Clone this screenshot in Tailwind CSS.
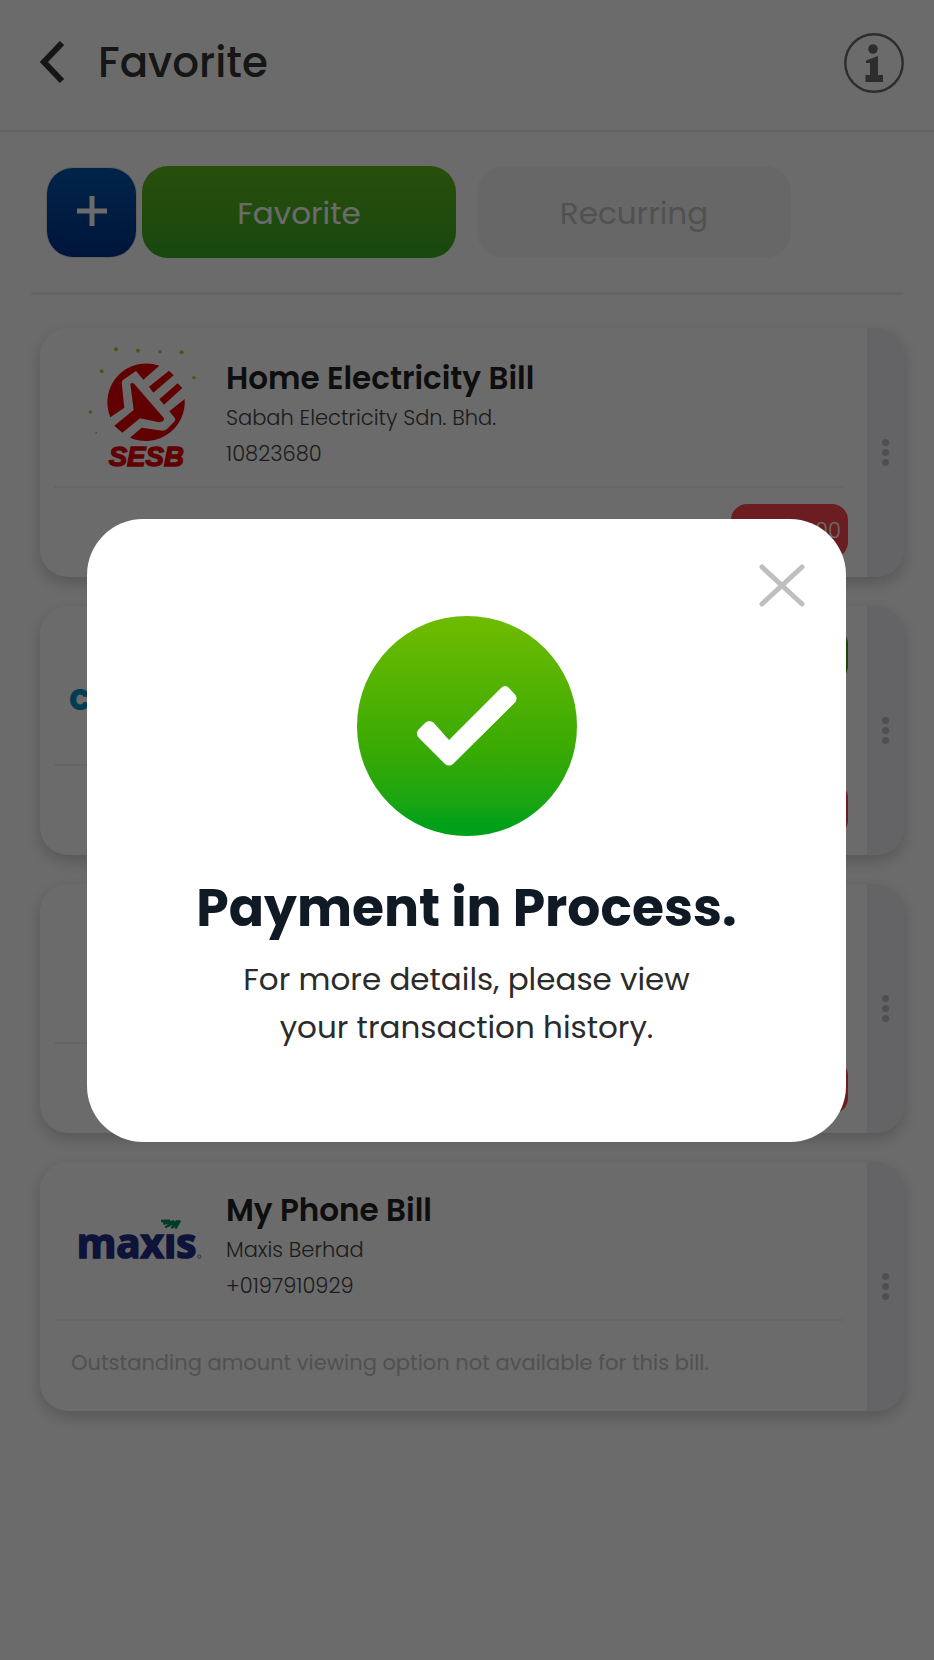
<!DOCTYPE html>
<html lang="en">
<head>
  <meta charset="UTF-8">
  <meta name="viewport" content="width=device-width, initial-scale=1.0">
  <title>Favorite</title>
  <script src="https://cdn.jsdelivr.net/npm/@tailwindcss/browser@4"></script>
</head>
<body class="bg-white min-h-screen font-['Poppins','Inter',sans-serif] text-[#222222]">

  <!-- Header -->
  <header class="flex items-center h-[132px] pl-10 pr-[30px] pb-1 border-b-2 border-[#e8e8f2]">
    <button type="button" aria-label="Back" class="shrink-0">
      <svg class="w-7 h-11" viewBox="0 0 28 44" fill="none" stroke="#363636" stroke-width="6">
        <path d="M22 2 4 21l18 19"/>
      </svg>
    </button>
    <h1 class="ml-[30px] text-[42px] leading-[60px] font-medium text-[#363636]">Favorite</h1>
    <button type="button" aria-label="Information" class="ml-auto shrink-0">
      <svg class="w-[60px] h-[60px]" viewBox="0 0 60 60">
        <circle cx="30" cy="30" r="28.7" fill="none" stroke="#6b6b6b" stroke-width="2.4"/>
        <circle cx="29" cy="16" r="4.8" fill="#6b6b6b"/>
        <path d="M22 27.500l12-4.500v19h5v7H21.500v-7h4.500V30h-4z" fill="#6b6b6b"/>
      </svg>
    </button>
  </header>

  <!-- Tabs -->
  <nav class="flex items-center mx-[31px] pl-4 pt-[34px] pb-[34px] border-b-3 border-[#efeff4]">
    <button type="button" aria-label="Add bill" class="flex items-center justify-center shrink-0 size-[89px] pb-[2px] rounded-[26px] bg-linear-to-b from-[#0058ac] to-[#00328c] ring-1 ring-[#e4e4e4]">
      <svg class="size-[30px]" viewBox="0 0 30 30" stroke="#ffffff" stroke-width="5">
        <path d="M15 0v30M0 15h30"/>
      </svg>
    </button>
    <button type="button" class="ml-[6px] flex-1 max-w-[314px] h-[92px] pt-[2px] rounded-[26px] bg-linear-to-b from-[#62ba1a] to-[#37ab24] text-[31px] text-white">Favorite</button>
    <button type="button" class="ml-[21px] flex-1 max-w-[314px] h-[92px] pt-[2px] rounded-[26px] bg-[#f5f5f5] text-[31px] text-[#c1c1c1]">Recurring</button>
  </nav>

  <!-- Bills -->
  <main class="flex flex-col gap-[29px] pl-10 pr-[30px] pt-[33px] pb-10">

    <article class="flex h-[249px] rounded-[28px] overflow-hidden bg-white shadow-[0_6px_16px_rgba(0,0,0,0.2)]">
      <div class="flex-1 flex flex-col">
        <div class="flex h-[158px] pl-5">
          <svg class="w-40 h-[150px] mt-[2px] shrink-0" viewBox="90 60 480 450" role="img" aria-label="SESB">
            <g fill="#b5c82a">
              <circle cx="258" cy="118" r="6"/>
              <circle cx="324" cy="122" r="6"/>
              <circle cx="390" cy="125" r="5"/>
              <circle cx="455" cy="127" r="6"/>
              <circle cx="215" cy="184" r="6"/>
              <circle cx="492" cy="203" r="5"/>
              <circle cx="181" cy="306" r="5"/>
              <circle cx="199" cy="368" r="3"/>
            </g>
            <g fill="#e60008">
              <path d="M388 167A117 117 0 0 0 241 322L283 293 275 218Q276 212 282 208L318 183 340 209z"/>
              <path d="M301 222q6-6 12 0l89 103q2 10-15 12L330 325 277 368 253 347 311 300z"/>
              <path d="M357 230l60-48 14 14-61 52zM388 268l55-48 14 14-55 50z"/>
              <path d="M464 267A117 117 0 0 1 300 383L335 353 397 362Q406 362 412 356L434 334Q438 329 434 323L418 304z"/>
            </g>
            <text x="236" y="467" font-family="Liberation Sans, sans-serif" font-size="83" font-weight="700" font-style="italic" fill="#e60008" stroke="#e60008" stroke-width="4">SESB</text>
          </svg>
          <div class="ml-[6px] pt-7">
            <h2 class="text-[31px] leading-[44px] font-semibold text-[#222222]">Home Electricity Bill</h2>
            <p class="text-[21px] leading-9 font-light text-[#444444]">Sabah Electricity Sdn. Bhd.</p>
            <p class="text-[21px] leading-9 font-light text-[#444444]">10823680</p>
          </div>
        </div>
        <div class="flex-1 flex items-center justify-end ml-[14px] mr-6 pb-1 border-t-2 border-[#f2f2f2]">
          <span class="flex items-center justify-end w-[117px] h-[54px] -mr-[5px] pr-[7px] rounded-2xl bg-[#ff474f] text-[21px] font-light text-white">50.00</span>
        </div>
      </div>
      <button type="button" aria-label="More options" class="flex flex-col items-center justify-center gap-[3px] w-[37px] bg-[#eeeef5]">
        <span class="size-[7px] rounded-full bg-[#bdbdbd]"></span>
        <span class="size-[7px] rounded-full bg-[#bdbdbd]"></span>
        <span class="size-[7px] rounded-full bg-[#bdbdbd]"></span>
      </button>
    </article>

    <article class="flex h-[249px] rounded-[28px] overflow-hidden bg-white shadow-[0_6px_16px_rgba(0,0,0,0.2)]">
      <div class="flex-1 flex flex-col">
        <div class="flex justify-between h-[158px] pl-[29px] pr-[19px] pt-[22px]">
          <span class="pt-12 text-[36px] leading-[44px] font-bold text-[#0090c4]">celcom</span>
          <span class="w-[117px] h-[54px] rounded-2xl bg-[#37ab0f]"></span>
        </div>
        <div class="flex-1 flex items-center justify-end ml-[14px] mr-6 pb-1 border-t-2 border-[#f2f2f2]">
          <span class="w-[117px] h-[54px] -mr-[5px] rounded-2xl bg-[#ff474f]"></span>
        </div>
      </div>
      <button type="button" aria-label="More options" class="flex flex-col items-center justify-center gap-[3px] w-[37px] bg-[#eeeef5]">
        <span class="size-[7px] rounded-full bg-[#bdbdbd]"></span>
        <span class="size-[7px] rounded-full bg-[#bdbdbd]"></span>
        <span class="size-[7px] rounded-full bg-[#bdbdbd]"></span>
      </button>
    </article>

    <article class="flex h-[249px] rounded-[28px] overflow-hidden bg-white shadow-[0_6px_16px_rgba(0,0,0,0.2)]">
      <div class="flex-1 flex flex-col">
        <div class="h-[158px]"></div>
        <div class="flex-1 flex items-center justify-end ml-[14px] mr-6 pb-1 border-t-2 border-[#f2f2f2]">
          <span class="w-[117px] h-[54px] -mr-[5px] rounded-2xl bg-[#ff474f]"></span>
        </div>
      </div>
      <button type="button" aria-label="More options" class="flex flex-col items-center justify-center gap-[3px] w-[37px] bg-[#eeeef5]">
        <span class="size-[7px] rounded-full bg-[#bdbdbd]"></span>
        <span class="size-[7px] rounded-full bg-[#bdbdbd]"></span>
        <span class="size-[7px] rounded-full bg-[#bdbdbd]"></span>
      </button>
    </article>

    <article class="flex h-[249px] rounded-[28px] overflow-hidden bg-white shadow-[0_6px_16px_rgba(0,0,0,0.2)]">
      <div class="flex-1 flex flex-col">
        <div class="flex h-[157px] pl-5">
          <svg class="w-40 h-[150px] mt-[2px] shrink-0" viewBox="90 130 480 450" role="img" aria-label="maxis">
            <text x="140" y="412" font-family="Open Sans, sans-serif" font-size="121" font-weight="700" fill="#222e88" stroke="#222e88" stroke-width="5">maxıs</text>
            <path d="M393 301L420 300 400 310 432 301 406 320 444 300 424 322 450 300 436 324" fill="none" stroke="#00915a" stroke-width="7" stroke-linejoin="bevel"/>
            <circle cx="508" cy="408" r="5" fill="none" stroke="#777777" stroke-width="3"/>
          </svg>
          <div class="ml-[6px] pt-[26px]">
            <h2 class="text-[31px] leading-[44px] font-semibold text-[#222222]">My Phone Bill</h2>
            <p class="text-[21px] leading-9 font-light text-[#444444]">Maxis Berhad</p>
            <p class="text-[21px] leading-9 font-light text-[#444444]">+0197910929</p>
          </div>
        </div>
        <div class="flex-1 flex items-center ml-[14px] mr-6 pl-[17px] pb-[6px] border-t-2 border-[#f2f2f2]">
          <p class="text-[21px] leading-9 text-[#c1c1c1]">Outstanding amount viewing option not available for this bill.</p>
        </div>
      </div>
      <button type="button" aria-label="More options" class="flex flex-col items-center justify-center gap-[3px] w-[37px] bg-[#eeeef5]">
        <span class="size-[7px] rounded-full bg-[#bdbdbd]"></span>
        <span class="size-[7px] rounded-full bg-[#bdbdbd]"></span>
        <span class="size-[7px] rounded-full bg-[#bdbdbd]"></span>
      </button>
    </article>
  </main>

  <!-- Payment dialog -->
  <div class="fixed inset-0 flex items-center justify-center pl-[87px] pr-[88px] pt-[1px] bg-black/58">
    <div role="dialog" aria-modal="true" aria-labelledby="dialogTitle" class="relative w-full px-10 pt-[97px] pb-[91px] rounded-[56px] bg-white text-center">
      <button type="button" aria-label="Close" class="absolute top-11 right-10">
        <svg class="w-[48px] h-[46px]" viewBox="0 0 48 46" fill="none" stroke="#bfbfbf" stroke-width="5" stroke-linecap="round">
          <path d="M4 4l40 37M44 4L4 41"/>
        </svg>
      </button>
      <svg class="size-[220px] mx-auto" viewBox="0 0 220 220">
        <defs>
          <linearGradient id="circleFill" x1="0" y1="0" x2="0" y2="1">
            <stop offset="0" stop-color="#6fbc00"/>
            <stop offset="0.6" stop-color="#3aaa03"/>
            <stop offset="0.85" stop-color="#1aa512"/>
            <stop offset="0.95" stop-color="#00a01a"/>
          </linearGradient>
        </defs>
        <circle cx="110" cy="110" r="110" fill="url(#circleFill)"/>
        <path d="M61.500 113.500l7-7q4-3 8 0L92 124l52-52q4-4 8 0l6 6.500q3 4 0 8L96 148q-4 3-8 0L62 122q-4-4-.5-8.500z" fill="#ffffff"/>
      </svg>
      <h2 id="dialogTitle" class="mt-9 text-[52px] leading-[72px] font-bold text-[#101a24]">Payment in Process.</h2>
      <p class="mt-[11px] text-[31px] leading-[48px] text-[#2b2b2b]">For more details, please view<br>your transaction history.</p>
    </div>
  </div>

</body>
</html>
